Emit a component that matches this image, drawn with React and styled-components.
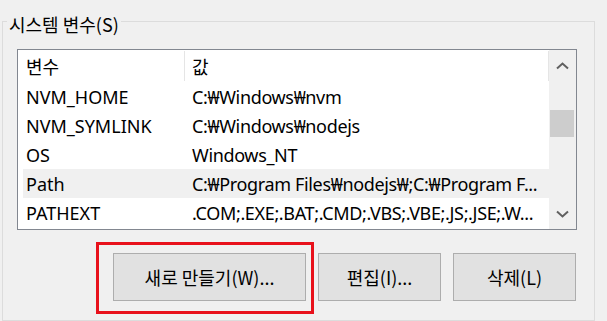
import React from 'react';
import styled, { createGlobalStyle } from 'styled-components';

const GlobalStyle = createGlobalStyle`
  html, body { margin: 0; padding: 0; background: #f0f0f0; }
  body {
    width: 607px; height: 321px; overflow: hidden;
    font-family: "Noto Sans", "Noto Sans CJK KR", sans-serif;
    color: #000;
  }
  * { box-sizing: border-box; }
`;

const Window = styled.div`
  width: 607px;
  height: 321px;
  padding: 6px 0 0 2px;
  background: #f0f0f0;
  overflow: hidden;
`;

const Group = styled.fieldset`
  margin: 0;
  width: 593px;
  height: 315px;
  min-width: 0;
  border: 1px solid #dcdcdc;
  padding: 13px 17px 0 14px;
`;

const Legend = styled.legend`
  margin-left: -10px;
  padding: 6px 2px 0 2px;
  font-size: 18px;
  line-height: 24px;
  font-family: "Noto Sans CJK KR", "Noto Sans", sans-serif;
`;

const ListBox = styled.div`
  display: flex;
  height: 181px;
  border: 1px solid #828790;
  background: #fff;
`;

const ListBody = styled.div`
  width: 531px;
  display: flex;
  flex-direction: column;
  overflow: hidden;
`;

const HeaderRow = styled.div`
  display: grid;
  grid-template-columns: 167px 364px;
  height: 32px;
  align-items: center;
`;

const HeaderCell = styled.div`
  height: 30px;
  display: flex;
  align-items: center;
  padding-left: ${p => p.$pad}px;
  border-right: 1px solid #e5e5e5;
  font-size: 18px;
  font-family: "Noto Sans CJK KR", "Noto Sans", sans-serif;
`;

const Row = styled.div`
  display: grid;
  grid-template-columns: 162px 1fr;
  height: 29px;
  margin-left: 5px;
  background: ${p => (p.$selected ? '#f0f0f0' : 'transparent')};
`;

const Cell = styled.div`
  font-size: 18px;
  line-height: 29px;
  padding-top: 1px;
  padding-left: ${p => p.$pad}px;
  letter-spacing: ${p => (p.$tight ? '-0.35px' : '0')};
  white-space: nowrap;
  overflow: hidden;
`;

const ScrollBar = styled.div`
  width: 27px;
  display: flex;
  flex-direction: column;
  background: #f0f0f0;
`;

const Arrow = styled.div`
  height: ${p => p.$h}px;
  display: flex;
  align-items: center;
  justify-content: center;
  margin-top: ${p => (p.$bottom ? 'auto' : '0')};
`;

const Thumb = styled.div`
  height: 27px;
  margin: 28px 2px 0 1px;
  background: #cdcdcd;
`;

const ButtonRow = styled.div`
  display: flex;
  justify-content: flex-end;
  gap: 12px;
  margin-top: 23px;
  padding-right: 1px;
`;

const ButtonWrap = styled.div`
  position: relative;
`;

const Button = styled.button`
  width: ${p => p.$w}px;
  height: 48px;
  margin: 0;
  padding: 0;
  background: #e1e1e1;
  border: 1px solid #adadad;
  font-size: 18px;
  font-family: "Noto Sans CJK KR", "Noto Sans", sans-serif;
  color: #000;
  display: flex;
  align-items: center;
  justify-content: center;
`;

const Highlight = styled.div`
  position: absolute;
  left: -17px;
  top: -11px;
  right: -8px;
  bottom: -13px;
  border: 3px solid #e8111b;
  pointer-events: none;
`;

const Chevron = ({ down }) => (
  <svg width="13" height="8" viewBox="0 0 13 8">
    <polyline
      points={down ? '1,1.5 6.5,6.5 12,1.5' : '1,6.5 6.5,1.5 12,6.5'}
      fill="none"
      stroke="#606060"
      strokeWidth="2"
    />
  </svg>
);

const rows = [
  ['NVM_HOME', 'C:₩Windows₩nvm'],
  ['NVM_SYMLINK', 'C:₩Windows₩nodejs'],
  ['OS', 'Windows_NT'],
  ['Path', 'C:₩Program Files₩nodejs₩;C:₩Program F...', true],
  ['PATHEXT', '.COM;.EXE;.BAT;.CMD;.VBS;.VBE;.JS;.JSE;.W...'],
];

export default function App() {
  return (
    <>
      <GlobalStyle />
      <Window>
        <Group>
          <Legend>시스템 변수(S)</Legend>
          <ListBox>
            <ListBody>
              <HeaderRow>
                <HeaderCell $pad={8}>변수</HeaderCell>
                <HeaderCell $pad={7}>값</HeaderCell>
              </HeaderRow>
              {rows.map(([name, value, sel]) => (
                <Row key={name} $selected={sel}>
                  <Cell $pad={3}>{name}</Cell>
                  <Cell $pad={7} $tight>{value}</Cell>
                </Row>
              ))}
            </ListBody>
            <ScrollBar>
              <Arrow $h={32}><Chevron /></Arrow>
              <Thumb />
              <Arrow $h={30} $bottom><Chevron down /></Arrow>
            </ScrollBar>
          </ListBox>
          <ButtonRow>
            <ButtonWrap>
              <Button $w={193}>새로 만들기(W)...</Button>
              <Highlight />
            </ButtonWrap>
            <ButtonWrap>
              <Button $w={123}>편집(I)...</Button>
            </ButtonWrap>
            <ButtonWrap>
              <Button $w={123}>삭제(L)</Button>
            </ButtonWrap>
          </ButtonRow>
        </Group>
      </Window>
    </>
  );
}
